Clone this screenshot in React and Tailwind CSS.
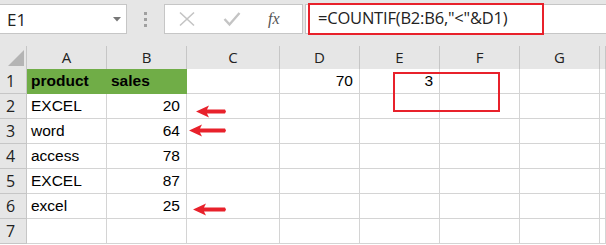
import React from 'react';

const cols = ['A', 'B', 'C', 'D', 'E', 'F', 'G', ''];

const rows = [
  { n: 1, cells: ['product', 'sales', '', '70', '3', '', '', ''] },
  { n: 2, cells: ['EXCEL', '20', '', '', '', '', '', ''] },
  { n: 3, cells: ['word', '64', '', '', '', '', '', ''] },
  { n: 4, cells: ['access', '78', '', '', '', '', '', ''] },
  { n: 5, cells: ['EXCEL', '87', '', '', '', '', '', ''] },
  { n: 6, cells: ['excel', '25', '', '', '', '', '', ''] },
  { n: 7, cells: ['', '', '', '', '', '', '', ''] },
];

const gridCols = 'grid grid-cols-[27px_80px_80px_93px_80px_80px_80px_80px_1fr]';

// red hand-drawn style arrow pointing left
function Arrow({ className, w }) {
  return (
    <svg className={className} width={w} height="13" viewBox={`0 0 ${w} 13`}>
      <path d={`M0 6.5 L13 0.5 L11 4.5 L${w - 1} 4.5 L${w} 6.5 L${w - 1} 8.5 L11 8.5 L13 12.5 Z`} fill="#e8212b" />
    </svg>
  );
}

function Toolbar() {
  return (
    <div className="h-[46px] bg-[#e6e6e6] flex items-start pt-[4px]">
      <div className="w-[127px] h-[30px] bg-white border-y border-r border-[#c6c6c6] flex items-center justify-between pl-[7px] pr-[5px]">
        <span className="text-[17px] text-[#222] font-['Open_Sans',sans-serif] leading-none">E1</span>
        <svg width="8" height="5" viewBox="0 0 8 5"><path d="M0 0 H8 L4 4.5 Z" fill="#777" /></svg>
      </div>
      <div className="w-[37px] h-[30px] flex flex-col items-center justify-center gap-[3px]">
        <span className="w-[3px] h-[3px] bg-[#a0a0a0]" />
        <span className="w-[3px] h-[3px] bg-[#a0a0a0]" />
        <span className="w-[3px] h-[3px] bg-[#a0a0a0]" />
      </div>
      <div className="w-[139px] h-[30px] bg-white border border-[#c6c6c6] flex items-center pl-[13px] gap-[27px]">
        <svg width="18" height="16" viewBox="0 0 18 16"><path d="M2 1.5 L16 14.5 M16 1.5 L2 14.5" stroke="#c4c4c4" strokeWidth="1.6" /></svg>
        <svg width="18" height="16" viewBox="0 0 18 16"><path d="M1.5 8 L6.5 13.5 L16.5 2" stroke="#c4c4c4" strokeWidth="2.4" fill="none" /></svg>
        <span className="text-[16px] italic font-['Liberation_Serif',serif] text-[#555] leading-none">fx</span>
      </div>
      <div className="ml-[2px] flex-1 h-[30px] bg-white border-y border-l border-[#c6c6c6] flex items-center">
        <div className="ml-[2px] w-[236px] h-[32px] -mt-[1px] border-2 border-[#e8212b] flex items-center pl-[8px]">
          <span className="text-[16.5px] text-[#222] font-['Open_Sans',sans-serif] leading-none tracking-[-0.2px]">=COUNTIF(B2:B6,"&lt;"&amp;D1)</span>
        </div>
      </div>
    </div>
  );
}

export default function App() {
  return (
    <div className="w-[606px] h-[245px] bg-white overflow-hidden relative font-['Liberation_Sans',sans-serif]">
      <Toolbar />
      <div className={`${gridCols} h-[23px] bg-[#e6e6e6]`}>
        <div className="border-r border-[#c6c6c6] relative">
          <svg className="absolute left-[8px] top-[4px]" width="16" height="16" viewBox="0 0 16 16"><path d="M16 0 L16 16 L0 16 Z" fill="#b4b4b4" /></svg>
        </div>
        {cols.map((c, i) => (
          <div key={i} className="border-r border-[#c6c6c6] flex items-center justify-center text-[15px] text-[#222] font-['Open_Sans',sans-serif]">
            {c}
          </div>
        ))}
      </div>
      {rows.map((r) => (
        <div key={r.n} className={`${gridCols} h-[25px]`}>
          <div className="bg-[#e6e6e6] border-r border-b border-[#c6c6c6] flex items-center pl-[6px] text-[16px] text-[#222] font-['Open_Sans',sans-serif]">
            {r.n}
          </div>
          {r.cells.map((v, i) => {
            const green = r.n === 1 && i < 2;
            const num = v !== '' && !isNaN(Number(v));
            return (
              <div
                key={i}
                className={`border-b border-r ${green ? 'bg-[#70ad47] border-r-[#70ad47] border-b-[#70ad47] font-bold' : 'border-[#d4d4d4]'} flex items-center ${num ? 'justify-end pr-[6px]' : 'pl-[4px]'} text-[15.5px] text-black`}
              >
                {v}
              </div>
            );
          })}
        </div>
      ))}
      <div className="absolute left-[393px] top-[72px] w-[107px] h-[40px] border-2 border-[#e8212b]" />
      <Arrow className="absolute left-[196px] top-[105px]" w={30} />
      <Arrow className="absolute left-[189px] top-[124px]" w={37} />
      <Arrow className="absolute left-[193px] top-[203px]" w={33} />
    </div>
  );
}
